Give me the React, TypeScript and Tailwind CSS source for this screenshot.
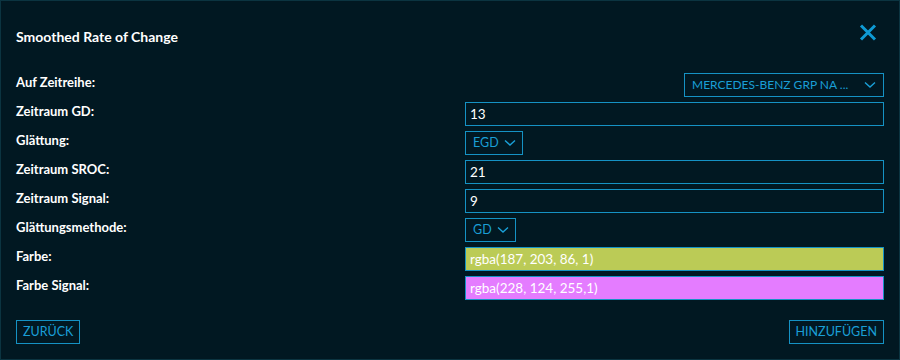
import React from "react";

const font = { fontFamily: "Lato, 'Noto Sans', sans-serif" };

// Chevron used inside the dropdowns
const Chevron: React.FC = () => (
  <svg width="12" height="8" viewBox="0 0 12 8" fill="none" className="shrink-0">
    <path d="M1 1.5 L6 6 L11 1.5" stroke="#1aa0d8" strokeWidth="1.4" />
  </svg>
);

const Select: React.FC<{ value: string; className?: string }> = ({ value, className = "" }) => (
  <div
    className={`h-6 border border-[#1592c4] flex items-center gap-[5px] pl-[7px] pr-[6px] text-[12.5px] text-[#1a9fd6] overflow-hidden ${className}`}
  >
    <span className="whitespace-nowrap">{value}</span>
    <Chevron />
  </div>
);

const TextInput: React.FC<{ value: string; bg?: string }> = ({ value, bg = "" }) => (
  <div className={`h-6 w-full border border-[#1592c4] flex items-center pl-1 text-[13.5px] text-white ${bg}`}>
    {value}
  </div>
);

const Row: React.FC<{ label: string; children: React.ReactNode }> = ({ label, children }) => (
  <div className="grid grid-cols-[449px_1fr] items-start h-6">
    <div className="text-[13px] font-bold text-white leading-[16px] pt-[1px]">{label}</div>
    <div className="flex">{children}</div>
  </div>
);

const Button: React.FC<{ label: string }> = ({ label }) => (
  <button className="h-6 border border-[#1592c4] px-[6px] text-[12.5px] text-[#1a9fd6] leading-none">
    {label}
  </button>
);

export default function App() {
  return (
    <div
      style={font}
      className="w-[900px] h-[360px] bg-[#011822] border border-[#0b3441] flex flex-col px-[15px]"
    >
      <div className="flex items-center justify-between mt-[24px] h-[22px]">
        <h1 className="text-[14px] font-bold text-white">Smoothed Rate of Change</h1>
        <svg width="18" height="17" viewBox="0 0 18 17" className="mr-[7px] -mt-[8px]">
          <path d="M2 1.5 L16 15.5 M16 1.5 L2 15.5" stroke="#0e9ad4" strokeWidth="3" />
        </svg>
      </div>

      <div className="flex flex-col gap-[5px] mt-[26px]">
        <Row label="Auf Zeitreihe:">
          <Select
            value="MERCEDES-BENZ GRP NA ..."
            className="ml-auto w-[200px] justify-between pr-[7px] text-[12px]"
          />
        </Row>
        <Row label="Zeitraum GD:">
          <TextInput value="13" />
        </Row>
        <Row label="Glättung:">
          <Select value="EGD" />
        </Row>
        <Row label="Zeitraum SROC:">
          <TextInput value="21" />
        </Row>
        <Row label="Zeitraum Signal:">
          <TextInput value="9" />
        </Row>
        <Row label="Glättungsmethode:">
          <Select value="GD" />
        </Row>
        <Row label="Farbe:">
          <TextInput value="rgba(187, 203, 86, 1)" bg="bg-[#bbcb56]" />
        </Row>
        <Row label="Farbe Signal:">
          <TextInput value="rgba(228, 124, 255,1)" bg="bg-[#e47cff]" />
        </Row>
      </div>

      <div className="flex justify-between mt-auto mb-[15px]">
        <Button label="ZURÜCK" />
        <Button label="HINZUFÜGEN" />
      </div>
    </div>
  );
}
